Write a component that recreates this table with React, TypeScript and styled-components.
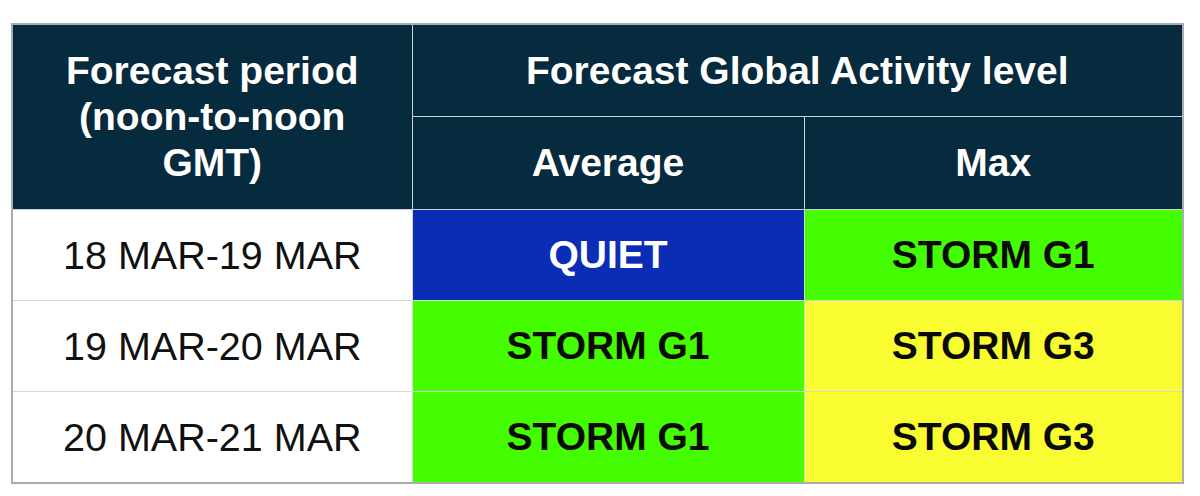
import { FC } from 'react'
import styled, { createGlobalStyle } from 'styled-components'

type Level = 'quiet' | 'g1' | 'g3'

interface TRow {
	period: string
	average: Level
	max: Level
}

const rows: TRow[] = [
	{ period: '18 MAR-19 MAR', average: 'quiet', max: 'g1' },
	{ period: '19 MAR-20 MAR', average: 'g1', max: 'g3' },
	{ period: '20 MAR-21 MAR', average: 'g1', max: 'g3' },
]

const labels: Record<Level, string> = {
	quiet: 'QUIET',
	g1: 'STORM G1',
	g3: 'STORM G3',
}

const App: FC = () => {
	return (
		<>
			<GlobalStyle />
			<Page>
				<Table>
					<colgroup>
						<col style={{ width: 400 }} />
						<col style={{ width: 392 }} />
						<col />
					</colgroup>
					<thead>
						<tr>
							<HeadCell rowSpan={2}>
								Forecast period
								<br />
								(noon-to-noon
								<br />
								GMT)
							</HeadCell>
							<HeadCell colSpan={2} $height={91}>Forecast Global Activity level</HeadCell>
						</tr>
						<tr>
							<HeadCell $height={92}>Average</HeadCell>
							<HeadCell $height={92}>Max</HeadCell>
						</tr>
					</thead>
					<tbody>
						{rows.map((row) => (
							<tr key={row.period}>
								<PeriodCell>{row.period}</PeriodCell>
								<LevelCell $level={row.average}>{labels[row.average]}</LevelCell>
								<LevelCell $level={row.max}>{labels[row.max]}</LevelCell>
							</tr>
						))}
					</tbody>
				</Table>
			</Page>
		</>
	)
}

const GlobalStyle = createGlobalStyle`
	body {
		margin: 0;
		background: #ffffff;
		font-family: "Liberation Sans", Arial, sans-serif;
	}
`

const Page = styled.div`
	padding: 23px 16px 0 11px;
`

const Table = styled.table`
	width: 1173px;
	table-layout: fixed;
	border-collapse: collapse;
	border: 2px solid #acacac;
`

const HeadCell = styled.th<{ $height?: number }>`
	height: ${({ $height }) => ($height ? `${$height}px` : 'auto')};
	padding: 0;
	background: #062b3e;
	color: #ffffff;
	font-size: 39px;
	font-weight: 700;
	line-height: 46px;
	text-align: center;
	vertical-align: middle;
	border: 1px solid #c9d2d8;
	text-shadow: 0 0 1px rgba(0, 0, 0, 0.4);
`

const PeriodCell = styled.td`
	height: 90px;
	padding: 0;
	background: #ffffff;
	color: #111111;
	font-size: 39.5px;
	text-align: center;
	vertical-align: middle;
	border: 1px solid #d6d6d6;
`

const levelBg: Record<Level, string> = {
	quiet: '#0b2db6',
	g1: '#43fd00',
	g3: '#f8fc30',
}

const LevelCell = styled.td<{ $level: Level }>`
	height: 90px;
	padding: 0;
	background: ${({ $level }) => levelBg[$level]};
	color: ${({ $level }) => ($level === 'quiet' ? '#ffffff' : '#0a0a0a')};
	font-size: 39px;
	font-weight: 700;
	text-align: center;
	vertical-align: middle;
	border: 1px solid #d6d6d6;
`

export default App
